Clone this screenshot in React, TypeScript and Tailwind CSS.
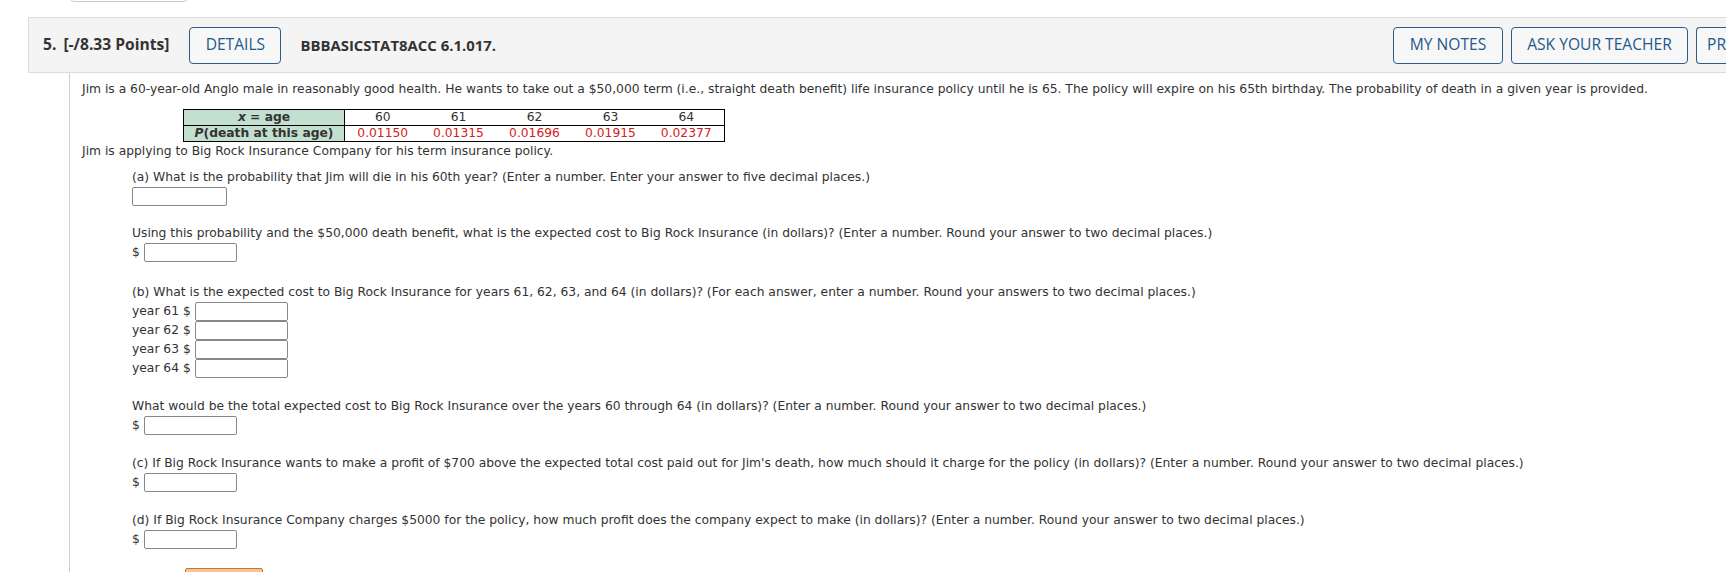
import React from "react";

const body = "font-['DejaVu_Sans',Verdana,sans-serif] text-[12.3px] text-[#333]";

function AnswerBox({ w = "w-[93px]" }: { w?: string }) {
  return <span className={`block ${w} h-[19px] border border-[#888] rounded-[2px] bg-white`} />;
}

function DollarRow() {
  return (
    <div className="flex items-center gap-[4px] h-[19px]">
      <span>$</span>
      <AnswerBox />
    </div>
  );
}

const ages = ["60", "61", "62", "63", "64"];
const probs = ["0.01150", "0.01315", "0.01696", "0.01915", "0.02377"];

export default function App() {
  return (
    <div className="bg-white w-[1726px] h-[572px] overflow-hidden">
      {/* leftover button from the previous question */}
      <div className="ml-[70px] -mt-[30px] w-[118px] h-[32px] border border-[#ccc] rounded-[4px]" />

      {/* Question header */}
      <div className="ml-[28px] mt-[15px] h-[56px] bg-[#f4f4f4] border border-r-0 border-[#dcdcdc] flex items-center font-['Open_Sans',sans-serif] text-[15.6px] text-[#333]">
        <span className="ml-[14px] font-bold">5.</span>
        <span className="ml-[7px] font-bold">[-/8.33 Points]</span>
        <button className="ml-[20px] h-[37px] w-[92px] flex-none border border-[#2c5d8a] rounded-[4px] text-[#24598a] bg-[#f7f7f7]">DETAILS</button>
        <span className="ml-[19px] font-bold text-[14.9px]">BBBASICSTAT8ACC 6.1.017.</span>
        <div className="ml-auto flex flex-none gap-[8px]">
          <button className="h-[37px] w-[110px] min-w-[110px] flex-none border border-[#2c5d8a] rounded-[4px] text-[#24598a] bg-[#f7f7f7]">MY NOTES</button>
          <button className="h-[37px] w-[177px] min-w-[177px] flex-none border border-[#2c5d8a] rounded-[4px] text-[#24598a] bg-[#f7f7f7]">ASK YOUR TEACHER</button>
          <button className="h-[37px] w-[30px] min-w-[30px] flex-none border border-r-0 border-[#2c5d8a] rounded-l-[4px] text-[#24598a] bg-[#f7f7f7] text-left pl-[10px] overflow-hidden whitespace-nowrap">PRACTICE ANOTHER</button>
        </div>
      </div>

      {/* Question body */}
      <div className={`ml-[69px] border-l border-[#cfcfcf] pl-[12px] pt-[7px] leading-[19px] ${body}`}>
        <p>
          Jim is a 60-year-old Anglo male in reasonably good health. He wants to take out a $50,000 term (i.e., straight death benefit) life insurance policy until he is 65. The policy will expire on his 65th birthday. The probability of death in a given year is provided.
        </p>

        <table className="ml-[101px] mt-[10px] border-collapse leading-[15px]">
          <tbody>
            <tr>
              <td className="w-[161px] border border-black bg-[#c3dfd0] text-center font-bold"><i>x</i> = age</td>
              {ages.map((a) => (
                <td key={a} className="w-[76px] border-y border-black text-center last:border-r">{a}</td>
              ))}
            </tr>
            <tr>
              <td className="border border-black bg-[#c3dfd0] text-center font-bold"><i>P</i>(death at this age)</td>
              {probs.map((p) => (
                <td key={p} className="border-y border-black text-center text-[#d42020] last:border-r">{p}</td>
              ))}
            </tr>
          </tbody>
        </table>

        <p>Jim is applying to Big Rock Insurance Company for his term insurance policy.</p>

        <div className="ml-[50px] mt-[7px]">
          <p>(a) What is the probability that Jim will die in his 60th year? (Enter a number. Enter your answer to five decimal places.)</p>
          <div className="flex"><AnswerBox w="w-[95px]" /></div>

          <p className="mt-[18px]">Using this probability and the $50,000 death benefit, what is the expected cost to Big Rock Insurance (in dollars)? (Enter a number. Round your answer to two decimal places.)</p>
          <DollarRow />

          <p className="mt-[21px]">(b) What is the expected cost to Big Rock Insurance for years 61, 62, 63, and 64 (in dollars)? (For each answer, enter a number. Round your answers to two decimal places.)</p>
          <div className="flex flex-col">
            {["61", "62", "63", "64"].map((y) => (
              <div key={y} className="flex items-center gap-[4px] h-[19px]">
                <span>year {y} $</span>
                <AnswerBox />
              </div>
            ))}
          </div>

          <p className="mt-[19px]">What would be the total expected cost to Big Rock Insurance over the years 60 through 64 (in dollars)? (Enter a number. Round your answer to two decimal places.)</p>
          <DollarRow />

          <p className="mt-[19px]">(c) If Big Rock Insurance wants to make a profit of $700 above the expected total cost paid out for Jim's death, how much should it charge for the policy (in dollars)? (Enter a number. Round your answer to two decimal places.)</p>
          <DollarRow />

          <p className="mt-[19px]">(d) If Big Rock Insurance Company charges $5000 for the policy, how much profit does the company expect to make (in dollars)? (Enter a number. Round your answer to two decimal places.)</p>
          <DollarRow />
        </div>

        <div className="-ml-[12px] mt-[19px] flex items-start gap-[10px] pl-[20px]">
          <span className="font-['Open_Sans',sans-serif] font-bold text-[15px] text-[#e8892e]">Need Help?</span>
          <span className="inline-block w-[78px] h-[24px] border border-[#c9772a] bg-[#f5c596] rounded-[2px]" />
        </div>
      </div>
    </div>
  );
}
